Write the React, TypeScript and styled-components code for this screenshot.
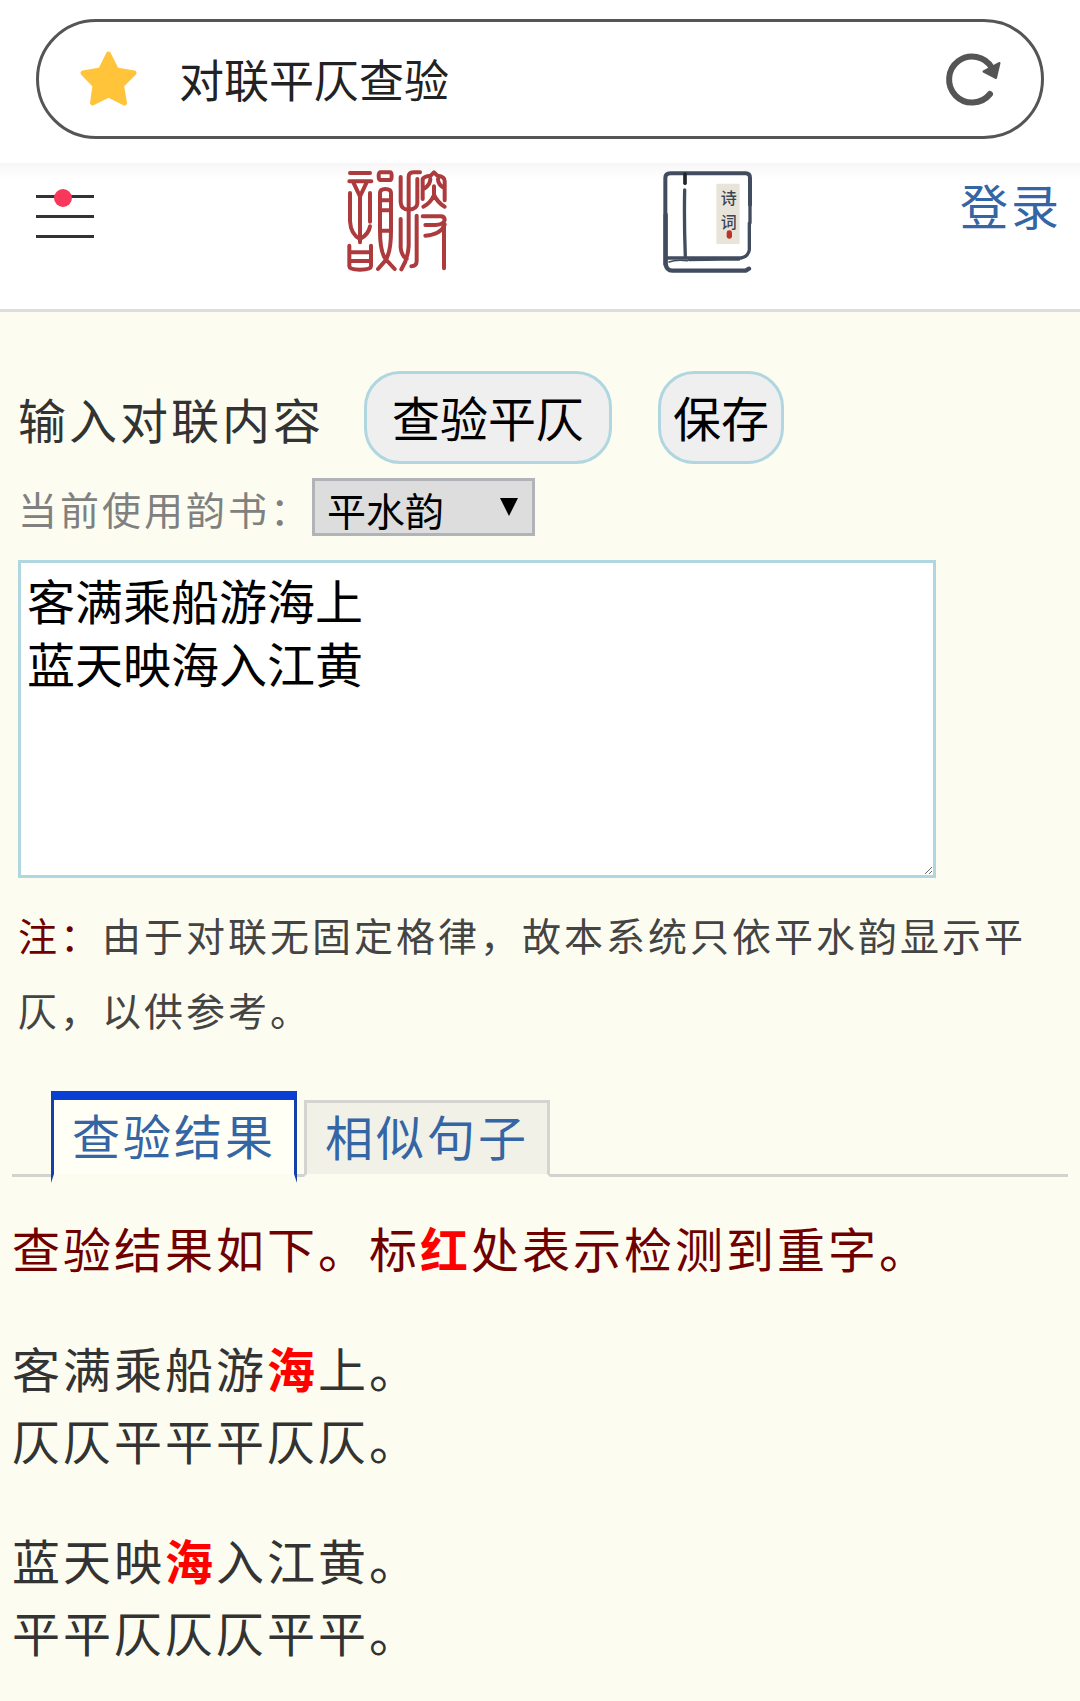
import React, { useState } from "react";
import styled, { createGlobalStyle } from "styled-components";

const GlobalStyle = createGlobalStyle`
  *, *::before, *::after { box-sizing: border-box; }
  body {
    margin: 0;
    background: #fcfdf0;
    color: #333;
    font-family: "Noto Sans CJK SC", "Noto Sans", sans-serif;
    font-size: 48px;
  }
  button, input, textarea, select { font-family: inherit; margin: 0; }
  p { margin: 0; }
`;

const AddressArea = styled.div`
  padding: 19px 36px 24px;
  background: #fff;
`;

const AddressPill = styled.div`
  display: flex;
  align-items: center;
  height: 120px;
  padding: 0 40px;
  border: 3px solid #555;
  border-radius: 60px;
`;

const AddressInput = styled.input`
  flex: 1;
  min-width: 0;
  margin-left: 42px;
  padding: 0;
  border: 0;
  outline: 0;
  background: transparent;
  color: #222;
  font-size: 45px;
  line-height: 66px;
`;

const IconButton = styled.button`
  display: block;
  padding: 0;
  border: 0;
  background: none;
  line-height: 0;
`;

const SiteHeader = styled.header`
  display: grid;
  grid-template-columns: 225fr 285fr 292fr 198fr;
  align-items: start;
  height: 149px;
  padding-top: 6px;
  border-bottom: 3px solid #dcdedb;
  background: linear-gradient(#f7f7f7, #fff 16px);
`;

const MenuCell = styled.div`
  padding: 20px 0 0 36px;
`;

const LogoLink = styled.a`
  justify-self: center;
  line-height: 0;
`;

const LoginLink = styled.a`
  justify-self: end;
  padding-right: 18px;
  color: #3465a4;
  letter-spacing: 3px;
  line-height: 70px;
  text-decoration: none;
`;

const FormArea = styled.form`
  padding: 59px 18px 0;
`;

const ActionRow = styled.div`
  display: flex;
  align-items: center;
`;

const FieldLabel = styled.label`
  margin-right: 40px;
  letter-spacing: 3px;
  line-height: 72px;
`;

const ActionButton = styled.button<{ $pad: number }>`
  height: 93px;
  margin-right: 46px;
  padding: 0 ${(p) => p.$pad}px 3px;
  border: 3px solid #b0d6e0;
  border-radius: 36px;
  background: #efefef;
  color: #000;
  font-size: 48px;
  line-height: 72px;
`;

const BookRow = styled.div`
  display: flex;
  align-items: center;
  margin-top: 14px;
`;

const BookLabel = styled.label`
  padding-top: 3px;
  color: #808080;
  font-size: 39px;
  letter-spacing: 3px;
  line-height: 55px;
`;

const SelectBox = styled.div`
  position: relative;
  line-height: 0;
`;

const BookSelect = styled.select`
  appearance: none;
  width: 223px;
  height: 58px;
  padding: 4px 0 0 12px;
  border: 3px solid #b0b3b8;
  border-radius: 0;
  background: #ddd;
  color: #000;
  font-size: 39px;
  line-height: 48px;
`;

const SelectArrow = styled.svg`
  position: absolute;
  top: 20px;
  right: 17px;
  pointer-events: none;
`;

const CoupletInput = styled.textarea`
  display: block;
  width: 88%;
  max-width: 918px;
  height: 318px;
  margin-top: 24px;
  padding: 5px 6px;
  border: 3px solid #b0d6e0;
  border-radius: 0;
  outline: 0;
  background: #fff;
  color: #000;
  font-size: 48px;
  line-height: 63px;
`;

const Note = styled.p`
  margin-top: 19px;
  color: #444;
  font-size: 39px;
  letter-spacing: 3px;
  line-height: 75px;
`;

const NoteMark = styled.span`
  color: #700000;
`;

const Results = styled.section`
  padding: 44px 12px 30px;
`;

const TabBar = styled.div`
  display: flex;
  align-items: flex-end;
  gap: 7px;
  padding-left: 39px;
  border-bottom: 3px solid #d2d3cf;
`;

const Tab = styled.button<{ $active: boolean }>`
  height: ${(p) => (p.$active ? 92 : 77)}px;
  margin-bottom: ${(p) => (p.$active ? -9 : -3)}px;
  padding: 0 18px 6px;
  border-style: solid;
  border-width: ${(p) => (p.$active ? "9px 3px" : "3px")};
  border-color: ${(p) =>
    p.$active ? "#0a3fd6 #1440a8 #fcfdf0" : "#d4d5d1 #d4d5d1 #fcfdf0"};
  background: ${(p) => (p.$active ? "#fffff5" : "#f1f1e8")};
  color: #3465a4;
  font-size: 48px;
  letter-spacing: 3px;
  line-height: 65px;
`;

const ResultList = styled.div`
  display: grid;
  gap: 48px;
  margin-top: 34px;
  letter-spacing: 3px;
  line-height: 72px;
`;

const Summary = styled.p`
  color: #700000;
`;

const Repeated = styled.strong`
  color: #f00;
  font-weight: 700;
`;

function StarIcon() {
  return (
    <svg width="58" height="58" viewBox="0 0 58 58" aria-hidden="true">
      <path
        d="M29.500 4 L37.500 20 L55 23 L42.500 35.500 L45.500 53 L29.500 45 L13.500 53 L16 35.500 L4 23 L21.500 20 Z"
        fill="#ffc43a"
        stroke="#ffc43a"
        strokeWidth="5"
        strokeLinejoin="round"
      />
    </svg>
  );
}

function ReloadIcon() {
  return (
    <svg width="56" height="56" viewBox="0 0 56 56" aria-hidden="true">
      <path
        d="M45 43 A23 23 0 1 1 47 17"
        fill="none"
        stroke="#555"
        strokeWidth="6"
        strokeLinecap="round"
      />
      <path
        d="M54.500 12 L51 27 L38.500 20.500 Z"
        fill="#555"
        stroke="#555"
        strokeWidth="2"
        strokeLinejoin="round"
      />
    </svg>
  );
}

function MenuIcon() {
  return (
    <svg width="58" height="50" viewBox="0 0 58 50" aria-hidden="true">
      <path d="M0 7.500H58M0 27.500H58M0 47.500H58" stroke="#333" strokeWidth="3" />
      <circle cx="27" cy="9" r="9" fill="#f8385a" />
    </svg>
  );
}

function SealLogo() {
  return (
    <svg width="102" height="104" viewBox="50 40 306 312" role="img" aria-label="搜韵">
      <g fill="none" stroke="#ad3a3c" strokeWidth="12" strokeLinecap="round" strokeLinejoin="round">
        <path d="M62 52H122M60 77H126M72 80L92 122M112 80L92 122V260M62 112V196Q64 236 92 250Q118 236 122 212M122 112V198" />
        <path d="M60 270V332Q60 342 92 342Q125 342 125 332V270M60 290H125M60 316H125" />
        <path d="M152 50H182Q187 50 187 61Q187 73 182 73H154Q148 73 148 61Q148 52 152 50Z" />
        <path d="M152 225V112Q152 100 168 100Q185 100 185 112V225M152 134H185M152 164H185M152 225H185M152 225Q152 290 170 312L196 340M185 225Q185 290 168 315L146 340" />
        <path d="M272 50H252Q238 50 238 64V270Q236 310 216 341M214 64V140Q216 162 238 162M264 70V144Q262 160 238 162M214 190V276Q216 300 232 310M262 180V316Q262 332 246 332" />
        <path d="M280 96V70Q284 62 304 60L314 50L324 60Q346 62 346 76V134M280 100V130M303 70Q303 86 286 98M326 70Q326 86 342 96M314 92V118Q304 142 282 153M314 118Q326 142 346 153" />
        <path d="M280 182H334Q346 182 346 193Q344 206 318 208H288M346 206Q336 236 288 240M344 206V338" />
      </g>
    </svg>
  );
}

function BookLogo() {
  return (
    <svg width="90" height="104" viewBox="72 43 270 312" role="img" aria-label="诗词">
      <g fill="none" stroke="#414d5f" strokeLinecap="round" strokeLinejoin="round">
        <path d="M79 330V70Q79 56 94 56H320Q333 56 333 70V150" strokeWidth="12" />
        <path d="M333 140V205M331 205V286Q327 306 306 310H84" strokeWidth="10" />
        <path d="M80 180V326Q82 348 100 348H320L330 342" strokeWidth="13" />
        <path d="M137 106Q135 200 139 306" strokeWidth="10" />
        <path d="M138 58V86" stroke="#22262c" strokeWidth="11" />
        <path d="M90 322Q110 314 145 318" strokeWidth="5" />
        <path d="M150 316Q230 314 300 315" strokeWidth="7" />
      </g>
      <rect x="232" y="87" width="70" height="181" rx="4" fill="#e9e4da" />
      <g fill="#3c4652" fontFamily="'Noto Sans CJK SC', sans-serif" fontSize="48" fontWeight="500" textAnchor="middle">
        <text x="269" y="147">诗</text>
        <text x="269" y="219">词</text>
      </g>
      <rect x="263" y="227" width="16" height="25" rx="7" fill="#b93524" />
    </svg>
  );
}

const couplets = [
  { before: "客满乘船游", repeated: "海", after: "上。", tones: "仄仄平平平仄仄。" },
  { before: "蓝天映", repeated: "海", after: "入江黄。", tones: "平平仄仄仄平平。" },
];

export default function App() {
  const [tab, setTab] = useState(0);
  return (
    <>
      <GlobalStyle />
      <AddressArea>
        <AddressPill>
          <StarIcon />
          <AddressInput aria-label="地址栏" defaultValue="对联平仄查验" />
          <IconButton type="button" aria-label="刷新">
            <ReloadIcon />
          </IconButton>
        </AddressPill>
      </AddressArea>
      <SiteHeader>
        <MenuCell>
          <IconButton type="button" aria-label="菜单">
            <MenuIcon />
          </IconButton>
        </MenuCell>
        <LogoLink href="#home">
          <SealLogo />
        </LogoLink>
        <LogoLink href="#poems">
          <BookLogo />
        </LogoLink>
        <LoginLink href="#login">登录</LoginLink>
      </SiteHeader>
      <main>
        <FormArea onSubmit={(e) => e.preventDefault()}>
          <ActionRow>
            <FieldLabel htmlFor="couplet">输入对联内容</FieldLabel>
            <ActionButton type="submit" $pad={25}>
              查验平仄
            </ActionButton>
            <ActionButton type="button" $pad={12}>
              保存
            </ActionButton>
          </ActionRow>
          <BookRow>
            <BookLabel htmlFor="book">当前使用韵书：</BookLabel>
            <SelectBox>
              <BookSelect id="book" defaultValue="平水韵">
                <option>平水韵</option>
              </BookSelect>
              <SelectArrow width="18" height="18" viewBox="0 0 18 18" aria-hidden="true">
                <path d="M0 0H18L9 18Z" fill="#000" />
              </SelectArrow>
            </SelectBox>
          </BookRow>
          <CoupletInput id="couplet" spellCheck={false} defaultValue={"客满乘船游海上\n蓝天映海入江黄"} />
          <Note>
            <NoteMark>注：</NoteMark>由于对联无固定格律，故本系统只依平水韵显示平仄，以供参考。
          </Note>
        </FormArea>
        <Results>
          <TabBar role="tablist">
            {["查验结果", "相似句子"].map((name, i) => (
              <Tab
                key={name}
                type="button"
                role="tab"
                aria-selected={tab === i}
                $active={tab === i}
                onClick={() => setTab(i)}
              >
                {name}
              </Tab>
            ))}
          </TabBar>
          <ResultList>
            <Summary>
              查验结果如下。标<Repeated>红</Repeated>处表示检测到重字。
            </Summary>
            {couplets.map((line) => (
              <p key={line.tones}>
                {line.before}
                <Repeated>{line.repeated}</Repeated>
                {line.after}
                <br />
                {line.tones}
              </p>
            ))}
          </ResultList>
        </Results>
      </main>
    </>
  );
}
